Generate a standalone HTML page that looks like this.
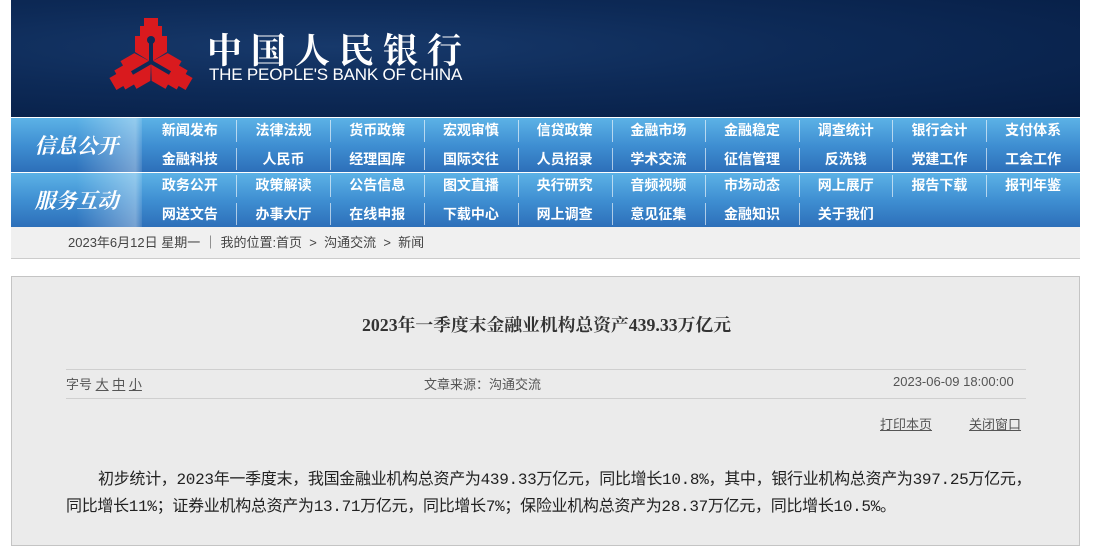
<!DOCTYPE html>
<html><head><meta charset="utf-8"><style>
*{margin:0;padding:0;box-sizing:border-box}
body{width:1096px;height:528px;background:#fff;font-family:"Liberation Sans","Noto Sans CJK SC",sans-serif;position:relative;overflow:hidden}
.hdr{position:absolute;left:11px;top:0;width:1069px;height:117px;background:radial-gradient(ellipse at 30% 40%,#17396b 0%,#0d2a57 45%,#061d44 100%)}
.cn{position:absolute;left:196px;top:24px;color:#fff;font-size:35px;letter-spacing:9px;font-family:"Noto Serif CJK SC",serif;font-weight:bold;white-space:nowrap}
.en{position:absolute;left:198px;top:65px;color:#fff;font-size:17px;white-space:nowrap;letter-spacing:-0.2px}
.band{position:absolute;left:11px;width:1069px;height:54px;background:linear-gradient(#5cb2e6,#3f8fd2 50%,#2d6fb9)}
.lab{position:absolute;left:0;top:0;width:131px;height:54px;background:linear-gradient(90deg,rgba(255,255,255,0) 50%,rgba(255,255,255,.35) 95%,rgba(255,255,255,.1));color:#fff;font-style:italic;font-size:21px;line-height:54px;text-align:center;font-family:"Noto Serif CJK SC",serif;font-weight:bold}
.it{position:absolute;width:93.7px;height:27px;line-height:26px;text-align:center;color:#fff;font-weight:bold;font-size:14px;white-space:nowrap}
.sep{position:absolute;width:1px;height:22px;background:rgba(255,255,255,.6)}
.bc{position:absolute;left:11px;top:227px;width:1069px;height:32px;background:#f0f0f0;border-bottom:1px solid #ccc;font-size:13px;color:#444;line-height:32px;padding-left:57px;white-space:nowrap}
.box{position:absolute;left:11px;top:276px;width:1069px;height:270px;background:#ebebeb;border:1px solid #c4c4c4}
.t{position:absolute;left:0;width:1069px;top:35px;text-align:center;font-size:17.8px;font-weight:bold;color:#333;font-family:"Liberation Serif","Noto Serif CJK SC",serif}
.ln{position:absolute;left:54px;width:960px;height:1px;background:#cfcfcf}
.m{position:absolute;top:97px;font-size:13px;color:#555;white-space:nowrap}
.p{position:absolute;font-size:16px;color:#222;white-space:nowrap;font-family:"Liberation Mono","Noto Sans CJK SC",monospace;letter-spacing:-0.3px}
</style></head><body>
<div class="hdr">
<svg style="position:absolute;left:95px;top:17px" width="90" height="90" viewBox="-45 -45 90 90">
<g fill="#d91a1e">
<path d="M-7,-44H7V-36H11V-26H16V-10L0,0L-16,-10V-26H-11V-36H-7Z"/>
<g transform="rotate(120)"><path d="M-7,-44H7V-36H11V-26H16V-10L0,0L-16,-10V-26H-11V-36H-7Z"/></g>
<g transform="rotate(240)"><path d="M-7,-44H7V-36H11V-26H16V-10L0,0L-16,-10V-26H-11V-36H-7Z"/></g>
</g>
<g stroke="#0d2a57" stroke-width="4" fill="none"><path d="M0,0V-22M0,0L19,11M0,0L-19,11"/></g>
<circle cx="0" cy="-22" r="4" fill="#0d2a57"/>
</svg>
<div class="cn">中国人民银行</div>
<div class="en">THE PEOPLE'S BANK OF CHINA</div>
</div>
<div class="band" style="top:118px"><div class="lab">信息公开</div></div>
<div class="band" style="top:173px"><div class="lab">服务互动</div></div>
<div class="bc">2023年6月12日 星期一 ｜ 我的位置:首页 &nbsp;&gt;&nbsp; 沟通交流 &nbsp;&gt;&nbsp; 新闻</div>
<div class="box">
<div class="t">2023年一季度末金融业机构总资产439.33万亿元</div>
<div class="ln" style="top:92px"></div>
<div class="ln" style="top:121px"></div>
<div class="m" style="left:54px">字号 <u>大</u> <u>中</u> <u>小</u></div>
<div class="m" style="left:412px">文章来源：沟通交流</div>
<div class="m" style="left:881px">2023-06-09 18:00:00</div>
<div class="m" style="left:868px;top:137px"><u>打印本页</u></div>
<div class="m" style="left:957px;top:137px"><u>关闭窗口</u></div>
<div class="p" style="left:86px;top:188px">初步统计，2023年一季度末，我国金融业机构总资产为439.33万亿元，同比增长10.8%，其中，银行业机构总资产为397.25万亿元，</div>
<div class="p" style="left:54px;top:215px">同比增长11%；证券业机构总资产为13.71万亿元，同比增长7%；保险业机构总资产为28.37万亿元，同比增长10.5%。</div>
</div>
<div style="position:absolute;left:0;top:0">
<div class="it" style="left:143px;top:117px">新闻发布</div><div class="it" style="left:236.7px;top:117px">法律法规</div><div class="it" style="left:330.4px;top:117px">货币政策</div><div class="it" style="left:424.1px;top:117px">宏观审慎</div><div class="it" style="left:517.8px;top:117px">信贷政策</div><div class="it" style="left:611.5px;top:117px">金融市场</div><div class="it" style="left:705.2px;top:117px">金融稳定</div><div class="it" style="left:798.9px;top:117px">调查统计</div><div class="it" style="left:892.6px;top:117px">银行会计</div><div class="it" style="left:986.3px;top:117px">支付体系</div>
<div class="it" style="left:143px;top:146px">金融科技</div><div class="it" style="left:236.7px;top:146px">人民币</div><div class="it" style="left:330.4px;top:146px">经理国库</div><div class="it" style="left:424.1px;top:146px">国际交往</div><div class="it" style="left:517.8px;top:146px">人员招录</div><div class="it" style="left:611.5px;top:146px">学术交流</div><div class="it" style="left:705.2px;top:146px">征信管理</div><div class="it" style="left:798.9px;top:146px">反洗钱</div><div class="it" style="left:892.6px;top:146px">党建工作</div><div class="it" style="left:986.3px;top:146px">工会工作</div>
<div class="it" style="left:143px;top:172px">政务公开</div><div class="it" style="left:236.7px;top:172px">政策解读</div><div class="it" style="left:330.4px;top:172px">公告信息</div><div class="it" style="left:424.1px;top:172px">图文直播</div><div class="it" style="left:517.8px;top:172px">央行研究</div><div class="it" style="left:611.5px;top:172px">音频视频</div><div class="it" style="left:705.2px;top:172px">市场动态</div><div class="it" style="left:798.9px;top:172px">网上展厅</div><div class="it" style="left:892.6px;top:172px">报告下载</div><div class="it" style="left:986.3px;top:172px">报刊年鉴</div>
<div class="it" style="left:143px;top:201px">网送文告</div><div class="it" style="left:236.7px;top:201px">办事大厅</div><div class="it" style="left:330.4px;top:201px">在线申报</div><div class="it" style="left:424.1px;top:201px">下载中心</div><div class="it" style="left:517.8px;top:201px">网上调查</div><div class="it" style="left:611.5px;top:201px">意见征集</div><div class="it" style="left:705.2px;top:201px">金融知识</div><div class="it" style="left:798.9px;top:201px">关于我们</div>
<div class="sep" style="left:236px;top:120px"></div><div class="sep" style="left:330px;top:120px"></div><div class="sep" style="left:424px;top:120px"></div><div class="sep" style="left:518px;top:120px"></div><div class="sep" style="left:612px;top:120px"></div><div class="sep" style="left:705px;top:120px"></div><div class="sep" style="left:799px;top:120px"></div><div class="sep" style="left:892px;top:120px"></div><div class="sep" style="left:986px;top:120px"></div>
<div class="sep" style="left:236px;top:148px"></div><div class="sep" style="left:330px;top:148px"></div><div class="sep" style="left:424px;top:148px"></div><div class="sep" style="left:518px;top:148px"></div><div class="sep" style="left:612px;top:148px"></div><div class="sep" style="left:705px;top:148px"></div><div class="sep" style="left:799px;top:148px"></div><div class="sep" style="left:892px;top:148px"></div><div class="sep" style="left:986px;top:148px"></div>
<div class="sep" style="left:236px;top:175px"></div><div class="sep" style="left:330px;top:175px"></div><div class="sep" style="left:424px;top:175px"></div><div class="sep" style="left:518px;top:175px"></div><div class="sep" style="left:612px;top:175px"></div><div class="sep" style="left:705px;top:175px"></div><div class="sep" style="left:799px;top:175px"></div><div class="sep" style="left:892px;top:175px"></div><div class="sep" style="left:986px;top:175px"></div>
<div class="sep" style="left:236px;top:203px"></div><div class="sep" style="left:330px;top:203px"></div><div class="sep" style="left:424px;top:203px"></div><div class="sep" style="left:518px;top:203px"></div><div class="sep" style="left:612px;top:203px"></div><div class="sep" style="left:705px;top:203px"></div><div class="sep" style="left:799px;top:203px"></div>
</div>
</body></html>
